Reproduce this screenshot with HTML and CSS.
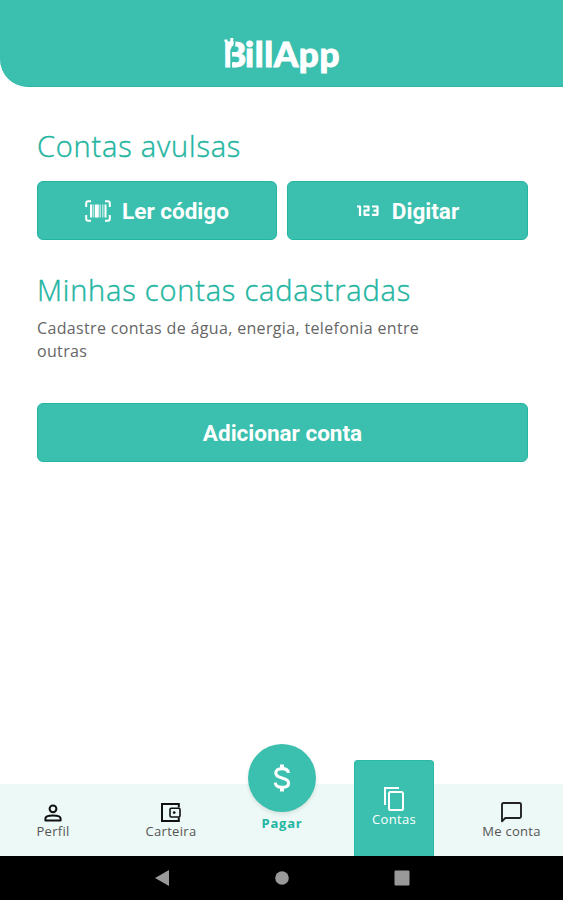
FILE: index.html
```html
<!DOCTYPE html>
<html lang="pt-BR">

<head>
    <meta charset="UTF-8">
    <meta name="viewport" content="width=device-width, initial-scale=1.0">
    <title>BillApp</title>
    <link rel="stylesheet" href="styles.css">
</head>

<body>
    <div class="app">
        <header class="header">
            <div class="logo">
                <span class="logo-b">B</span><span>illApp</span>
                <svg class="logo-cut" width="24" height="36" viewBox="0 0 24 36">
                    <path d="M11.5 2 V10 L8.2 15 V33" fill="none" stroke="#3bbfae" stroke-width="1.8"/>
                    <path d="M3 7 V4.5 M8.8 9 V3 M11 27 V31" stroke="#fff" stroke-width="3"/>
                </svg>
            </div>
        </header>

        <main class="content">
            <h1>Contas avulsas</h1>
            <div class="buttons">
                <button class="btn read">
                    <svg width="26" height="22" viewBox="0 0 26 22" fill="none" stroke="#fff">
                        <path d="M1.2 7 V3.2 Q1.2 1.2 3.2 1.2 H6 M20 1.2 H22.8 Q24.8 1.2 24.8 3.2 V7 M24.8 15 V18.8 Q24.8 20.8 22.8 20.8 H20 M6 20.8 H3.2 Q1.2 20.8 1.2 18.8 V15" stroke-width="2"/>
                        <path d="M6 4.5 V17.5 M20.5 4.5 V17.5" stroke-width="2"/>
                        <path d="M11.8 4.5 V17.5" stroke-width="4"/>
                        <path d="M8.2 4.5 V17.5 M15.2 4.5 V17.5 M17.8 4.5 V17.5" stroke-width="1.2" stroke-opacity=".75"/>
                    </svg>
                    <span>Ler código</span>
                </button>
                <button class="btn type">
                    <svg width="22" height="12" viewBox="0 0 22 12" fill="none" stroke="#fff" stroke-width="2.2" stroke-linejoin="round">
                        <path d="M0 1.5 H3 V11"/>
                        <path d="M6.5 1.5 H11.5 V5.5 H7.5 V9.8 H12.5"/>
                        <path d="M15 1.5 H20.5 V9.8 H15 M16.5 5.6 H20.5"/>
                    </svg>
                    <span>Digitar</span>
                </button>
            </div>

            <h1 class="registered">Minhas contas cadastradas</h1>
            <p class="info">Cadastre contas de água, energia, telefonia entre outras</p>
            <button class="btn add"><span>Adicionar conta</span></button>
        </main>

        <nav class="nav">
            <a class="nav-item">
                <svg class="person" width="18" height="18" viewBox="0 0 18 18" fill="none" stroke="#111" stroke-width="2">
                    <circle cx="9" cy="4.8" r="3.4"/>
                    <path d="M1.4 16.6 V14.5 Q1.4 11.4 9 11.4 Q16.6 11.4 16.6 14.5 V16.6 Z" stroke-linejoin="round"/>
                </svg>
                <span>Perfil</span>
            </a>
            <a class="nav-item">
                <svg class="wallet" width="20" height="19" viewBox="0 0 20 19" fill="none" stroke="#111" stroke-width="2">
                    <path d="M17.8 4.5 V1 H1 V18 H17.8 V14.5"/>
                    <rect x="9" y="5.2" width="10" height="8.8" rx="1.2" stroke-width="1.6"/>
                    <circle cx="13.2" cy="9.6" r="1.4" fill="#111" stroke="none"/>
                </svg>
                <span>Carteira</span>
            </a>
            <a class="nav-item pay">
                <span class="pay-circle">
                    <svg width="18" height="28" viewBox="0 0 18 28" fill="none" stroke="#fff" stroke-width="3.1">
                        <path d="M15.4 9 C15.2 6.2 12.8 4.6 9 4.6 C5.2 4.6 2.8 6.4 2.8 9 C2.8 11.8 5 12.9 9 13.9 C13.4 15 15.6 16.3 15.6 19 C15.6 21.8 12.9 23.4 9 23.4 C5 23.4 2.5 21.6 2.3 18.7"/>
                        <path d="M9 .5 V5 M9 23 V27.5" stroke-width="4"/>
                    </svg>
                </span>
                <span>Pagar</span>
            </a>
            <a class="nav-item active">
                <svg width="20" height="24" viewBox="0 0 20 24" fill="none" stroke="#fff" stroke-width="2">
                    <path d="M1 18 V1 H15"/>
                    <rect x="5" y="5" width="14" height="18" rx="1.6"/>
                </svg>
                <span>Contas</span>
            </a>
            <a class="nav-item">
                <svg width="21" height="21" viewBox="0 0 21 21" fill="none" stroke="#222" stroke-width="1.9" stroke-linejoin="round">
                    <path d="M1 19.3 V2.5 Q1 1 2.5 1 H18.5 Q20 1 20 2.5 V14.5 Q20 16 18.5 16 H4.3 Z"/>
                </svg>
                <span>Me conta</span>
            </a>
        </nav>

        <footer class="system-bar">
            <svg width="15" height="18" viewBox="0 0 15 18"><path d="M0 9 L14 1 V17 Z" fill="#999"/></svg>
            <svg width="14" height="14" viewBox="0 0 14 14"><circle cx="7" cy="7" r="6.8" fill="#999"/></svg>
            <svg width="16" height="16" viewBox="0 0 16 16"><rect x=".5" y=".5" width="15" height="15" rx="1.2" fill="#999"/></svg>
        </footer>
    </div>
</body>

</html>
```
FILE: styles.css
```css
* {
    box-sizing: border-box;
}

body {
    font-family: "Open Sans", sans-serif;
    background-color: #fff;
    margin: 0;
}

.app {
    display: flex;
    flex-direction: column;
    height: 900px;
    overflow: hidden;
}

.header {
    display: flex;
    justify-content: center;
    height: 87px;
    padding-top: 31px;
    background-color: #3bbfae;
    border-bottom: 1px solid #2bb8a5;
    border-radius: 0 0 0 28px;
}

.logo {
    position: relative;
    height: 44px;
    color: #fff;
    font-family: Lato, sans-serif;
    font-size: 35px;
    font-weight: 900;
    line-height: 44px;
    letter-spacing: 0.6px;
    -webkit-text-stroke: 0.9px #fff;
}

.logo-b {
    letter-spacing: -1.2px;
}

.logo-cut {
    position: absolute;
    left: 0;
    top: 4px;
}

.content {
    flex: 1;
    padding: 39px 35px 0 37px;
}

h1 {
    margin: 0;
    color: #22b5a1;
    font-size: 29px;
    font-weight: 300;
    line-height: 40px;
    letter-spacing: 0.8px;
    white-space: nowrap;
    -webkit-text-stroke: 0.4px #22b5a1;
}

.buttons {
    display: grid;
    grid-template-columns: 240px 241px;
    gap: 10px;
    margin-top: 15px;
}

.btn {
    display: flex;
    justify-content: center;
    align-items: center;
    height: 59px;
    padding: 0;
    background-color: #3bbfae;
    color: #fff;
    border: 1px solid #24b5a2;
    border-radius: 6px;
    font-family: Roboto, sans-serif;
    font-size: 22.5px;
    font-weight: 700;
}

.read {
    gap: 11px;
}

.type {
    gap: 13px;
    padding-left: 1px;
}

.registered {
    margin-top: 30px;
}

.info {
    width: 400px;
    margin: 7px 0 0;
    color: #666;
    font-size: 16px;
    line-height: 23px;
    letter-spacing: 0.34px;
}

.add {
    width: 100%;
    margin-top: 40px;
}

.nav {
    display: grid;
    grid-template-columns: 106px 130px 92px 132px 103px;
    grid-template-rows: 72px;
    align-items: end;
    height: 72px;
    background-color: #edf9f6;
}

.nav-item {
    display: flex;
    flex-direction: column;
    align-items: center;
    justify-content: flex-end;
    justify-self: center;
    padding-bottom: 16px;
    color: #555;
    font-size: 13px;
    line-height: 17px;
    letter-spacing: 0.3px;
    white-space: nowrap;
}

.person,
.wallet {
    margin-bottom: 1px;
}

.pay {
    padding-bottom: 24px;
    color: #22b5a1;
    font-weight: 700;
    letter-spacing: 0.8px;
}

.pay-circle {
    display: flex;
    justify-content: center;
    align-items: center;
    width: 68px;
    height: 68px;
    margin-bottom: 3px;
    background-color: #3bbfae;
    border-radius: 50%;
    box-shadow: 0 2px 4px rgba(0, 0, 0, 0.1);
}

.active {
    width: 80px;
    height: 96px;
    padding-bottom: 28px;
    background-color: #3bbfae;
    border: 1px solid #2bb8a5;
    border-bottom: none;
    border-radius: 4px 4px 0 0;
    color: #fff;
}

.system-bar {
    display: flex;
    justify-content: center;
    align-items: center;
    gap: 105px;
    height: 44px;
    padding-left: 2px;
    background-color: #000;
}
```
